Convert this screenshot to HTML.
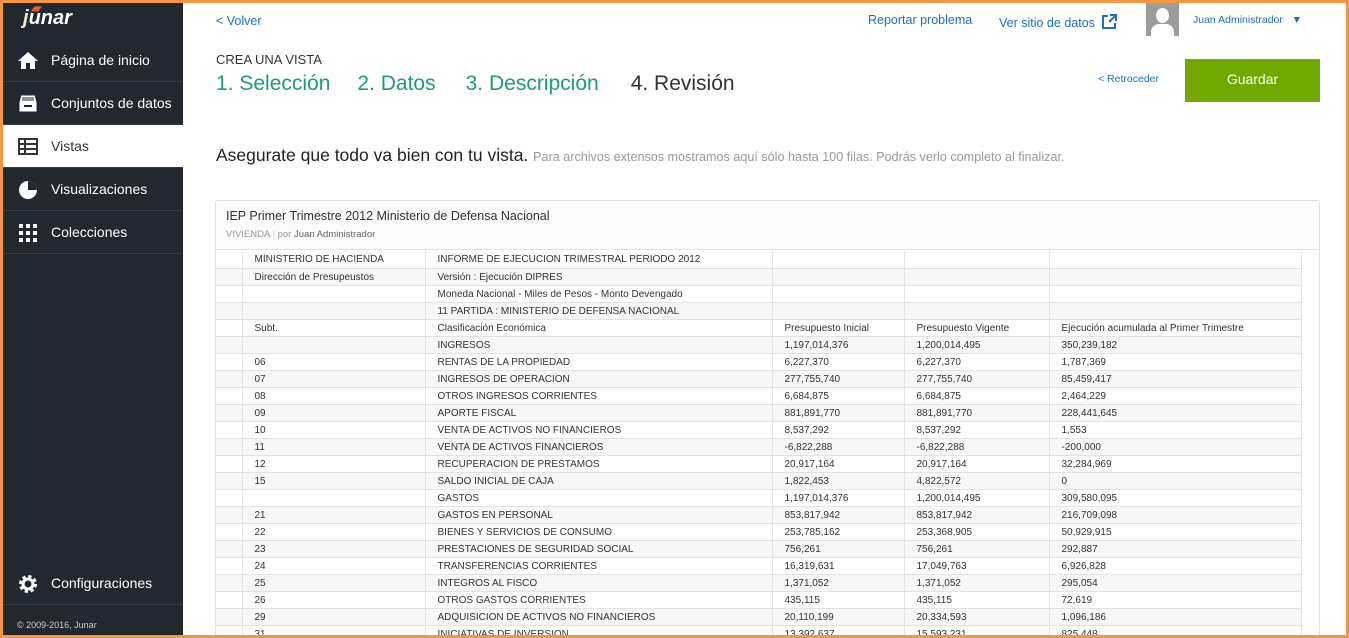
<!DOCTYPE html>
<html><head><meta charset="utf-8"><style>
*{box-sizing:border-box;margin:0;padding:0}
html,body{width:1349px;height:638px;overflow:hidden}
body{font-family:"Liberation Sans",sans-serif;background:#fff}
#wrap{position:relative;width:1349px;height:638px;overflow:hidden}
.frame{position:absolute;left:0;top:0;width:1349px;height:638px;border:3px solid #f7963f;z-index:10;pointer-events:none}
.side{position:absolute;left:3px;top:3px;width:180px;height:632px;background:#23272f}
.logo{position:absolute;left:20px;top:4px;color:#fff;font-weight:bold;font-style:italic;font-size:20px}
.nav{position:absolute;left:0;width:180px;height:43px;border-bottom:1px solid #343a44;color:#fff;font-size:14px;line-height:43px;padding-left:48px}
.nav.act{background:#fff;color:#333}
.ic{position:absolute;left:15px;top:12px;width:20px;height:19px}
.top{position:absolute;font-size:13px;color:#1e6fc4}
table{border-collapse:collapse;font-size:10px;color:#333;position:absolute;left:216px;top:251px}
td{height:17px;border-bottom:1px solid #e3e3e3;border-right:1px solid #e3e3e3;padding-left:12px;padding-top:1px;white-space:nowrap;overflow:hidden}
tr:nth-child(even) td{background:#f7f7f7}
</style></head><body><div id="wrap">
<div class="frame"></div>
<div class="side">
 <div class="logo"><span style="color:#e2602b;position:absolute;left:8px;top:-6px;font-size:12px">▰</span><span style="color:#f3e6c8">j</span>unar</div>
 <div class="nav" style="top:36px;height:43px"><svg class="ic" viewBox="0 0 20 19"><path d="M10 1 L0 10 H3 V18 H8 V12 H12 V18 H17 V10 H20Z" fill="#fff"/></svg>Página de inicio</div>
 <div class="nav" style="top:79px"><svg class="ic" viewBox="0 0 20 19"><path d="M3 1H17L19 8V18H1V8Z M4 4H16 M4 6H16" fill="#fff" stroke="#23272f" stroke-width="1"/><rect x="6" y="11" width="8" height="2" fill="#23272f"/></svg>Conjuntos de datos</div>
 <div class="nav act" style="top:122px"><svg class="ic" viewBox="0 0 20 19"><rect x="1" y="2" width="18" height="15" fill="none" stroke="#333" stroke-width="2"/><path d="M1 7H19M1 12H19M7 2V17" stroke="#333" stroke-width="2"/></svg>Vistas</div>
 <div class="nav" style="top:165px"><svg class="ic" viewBox="0 0 20 19"><circle cx="10" cy="10" r="9" fill="#fff"/><path d="M10 1V10H19A9 9 0 0 0 10 1Z" fill="#23272f"/></svg>Visualizaciones</div>
 <div class="nav" style="top:208px"><svg class="ic" viewBox="0 0 20 19"><g fill="#fff"><rect x="1" y="1" width="4" height="4"/><rect x="8" y="1" width="4" height="4"/><rect x="15" y="1" width="4" height="4"/><rect x="1" y="8" width="4" height="4"/><rect x="8" y="8" width="4" height="4"/><rect x="15" y="8" width="4" height="4"/><rect x="1" y="15" width="4" height="4"/><rect x="8" y="15" width="4" height="4"/><rect x="15" y="15" width="4" height="4"/></g></svg>Colecciones</div>
 <div class="nav" style="top:559px;border-bottom:1px solid #343a44"><svg class="ic" viewBox="0 0 20 19"><circle cx="10" cy="10" r="7" fill="none" stroke="#fff" stroke-width="4" stroke-dasharray="3 2.5"/><circle cx="10" cy="10" r="5" fill="none" stroke="#fff" stroke-width="3"/></svg>Configuraciones</div>
 <div style="position:absolute;left:14px;top:617px;color:#ccc;font-size:9px">© 2009-2016, Junar</div>
</div>
<div class="top" style="left:216px;top:14px;font-size:12.5px">&lt; Volver</div>
<div class="top" style="left:868px;top:13px;font-size:12.5px">Reportar problema</div>
<div class="top" style="left:999px;top:14px;font-size:12.5px">Ver sitio de datos <svg width="15" height="15" viewBox="0 0 15 15" style="vertical-align:-2px;margin-left:4px"><path d="M6 2H1V14H13V9" fill="none" stroke="#1e6fc4" stroke-width="2"/><path d="M8 1H14V7M14 1L7 8" fill="none" stroke="#1e6fc4" stroke-width="2"/></svg></div>
<div style="position:absolute;left:1146px;top:3px;width:33px;height:33px;background:#9c9c9c;overflow:hidden"><div style="position:absolute;left:10px;top:5px;width:13px;height:15px;border-radius:50%;background:#fff"></div><div style="position:absolute;left:5px;top:21px;width:23px;height:14px;border-radius:8px 8px 0 0;background:#fff"></div></div>
<div class="top" style="left:1193px;top:14px;font-size:10.5px">Juan Administrador &nbsp;&nbsp;▼</div>
<div style="position:absolute;left:216px;top:52px;font-size:13px;color:#333">CREA UNA VISTA</div>
<div style="position:absolute;left:216px;top:72px;font-size:21px;color:#1f9e6b">1. Selección<span style="margin-left:27px">2. Datos</span><span style="margin-left:30px">3. Descripción</span><span style="margin-left:32px;color:#333">4. Revisión</span></div>
<div class="top" style="left:1098px;top:73px;font-size:10.5px">&lt; Retroceder</div>
<div style="position:absolute;left:1185px;top:59px;width:135px;height:43px;background:#72a900;color:#fff;font-size:14px;text-align:center;line-height:40px">Guardar</div>
<div style="position:absolute;left:216px;top:145px;font-size:17.5px;color:#222">Asegurate que todo va bien con tu vista. <span style="font-size:12.6px;color:#999">Para archivos extensos mostramos aquí sólo hasta 100 filas. Podrás verlo completo al finalizar.</span></div>
<div style="position:absolute;left:215px;top:200px;width:1105px;height:450px;border:1px solid #e0e0e0;border-radius:3px;background:#fff"></div>
<div style="position:absolute;left:216px;top:201px;width:1103px;height:49px;background:#fbfbfb;border-bottom:1px solid #e3e3e3"></div>
<div style="position:absolute;left:226px;top:209px;font-size:12.5px;color:#333">IEP Primer Trimestre 2012 Ministerio de Defensa Nacional</div>
<div style="position:absolute;left:226px;top:229px;font-size:9.5px;color:#999">VIVIENDA <span style="color:#ccc">|</span> por <span style="color:#666">Juan Administrador</span></div>
<table>
<colgroup><col style="width:26px"><col style="width:183px"><col style="width:347px"><col style="width:132px"><col style="width:145px"><col style="width:252px"></colgroup>
<tr><td></td><td>MINISTERIO DE HACIENDA</td><td>INFORME DE EJECUCION TRIMESTRAL PERIODO 2012</td><td></td><td></td><td></td></tr>
<tr><td></td><td>Dirección de Presupeustos</td><td>Versión : Ejecución DIPRES</td><td></td><td></td><td></td></tr>
<tr><td></td><td></td><td>Moneda Nacional - Miles de Pesos - Monto Devengado</td><td></td><td></td><td></td></tr>
<tr><td></td><td></td><td>11 PARTIDA : MINISTERIO DE DEFENSA NACIONAL</td><td></td><td></td><td></td></tr>
<tr><td></td><td>Subt.</td><td>Clasificación Económica</td><td>Presupuesto Inicial</td><td>Presupuesto Vigente</td><td>Ejecución acumulada al Primer Trimestre</td></tr>
<tr><td></td><td></td><td>INGRESOS</td><td>1,197,014,376</td><td>1,200,014,495</td><td>350,239,182</td></tr>
<tr><td></td><td>06</td><td>RENTAS DE LA PROPIEDAD</td><td>6,227,370</td><td>6,227,370</td><td>1,787,369</td></tr>
<tr><td></td><td>07</td><td>INGRESOS DE OPERACION</td><td>277,755,740</td><td>277,755,740</td><td>85,459,417</td></tr>
<tr><td></td><td>08</td><td>OTROS INGRESOS CORRIENTES</td><td>6,684,875</td><td>6,684,875</td><td>2,464,229</td></tr>
<tr><td></td><td>09</td><td>APORTE FISCAL</td><td>881,891,770</td><td>881,891,770</td><td>228,441,645</td></tr>
<tr><td></td><td>10</td><td>VENTA DE ACTIVOS NO FINANCIEROS</td><td>8,537,292</td><td>8,537,292</td><td>1,553</td></tr>
<tr><td></td><td>11</td><td>VENTA DE ACTIVOS FINANCIEROS</td><td>-6,822,288</td><td>-6,822,288</td><td>-200,000</td></tr>
<tr><td></td><td>12</td><td>RECUPERACION DE PRESTAMOS</td><td>20,917,164</td><td>20,917,164</td><td>32,284,969</td></tr>
<tr><td></td><td>15</td><td>SALDO INICIAL DE CAJA</td><td>1,822,453</td><td>4,822,572</td><td>0</td></tr>
<tr><td></td><td></td><td>GASTOS</td><td>1,197,014,376</td><td>1,200,014,495</td><td>309,580,095</td></tr>
<tr><td></td><td>21</td><td>GASTOS EN PERSONAL</td><td>853,817,942</td><td>853,817,942</td><td>216,709,098</td></tr>
<tr><td></td><td>22</td><td>BIENES Y SERVICIOS DE CONSUMO</td><td>253,785,162</td><td>253,368,905</td><td>50,929,915</td></tr>
<tr><td></td><td>23</td><td>PRESTACIONES DE SEGURIDAD SOCIAL</td><td>756,261</td><td>756,261</td><td>292,887</td></tr>
<tr><td></td><td>24</td><td>TRANSFERENCIAS CORRIENTES</td><td>16,319,631</td><td>17,049,763</td><td>6,926,828</td></tr>
<tr><td></td><td>25</td><td>INTEGROS AL FISCO</td><td>1,371,052</td><td>1,371,052</td><td>295,054</td></tr>
<tr><td></td><td>26</td><td>OTROS GASTOS CORRIENTES</td><td>435,115</td><td>435,115</td><td>72,619</td></tr>
<tr><td></td><td>29</td><td>ADQUISICION DE ACTIVOS NO FINANCIEROS</td><td>20,110,199</td><td>20,334,593</td><td>1,096,186</td></tr>
<tr><td></td><td>31</td><td>INICIATIVAS DE INVERSION</td><td>13,392,637</td><td>15,593,231</td><td>825,448</td></tr>
</table>
</div></body></html>
